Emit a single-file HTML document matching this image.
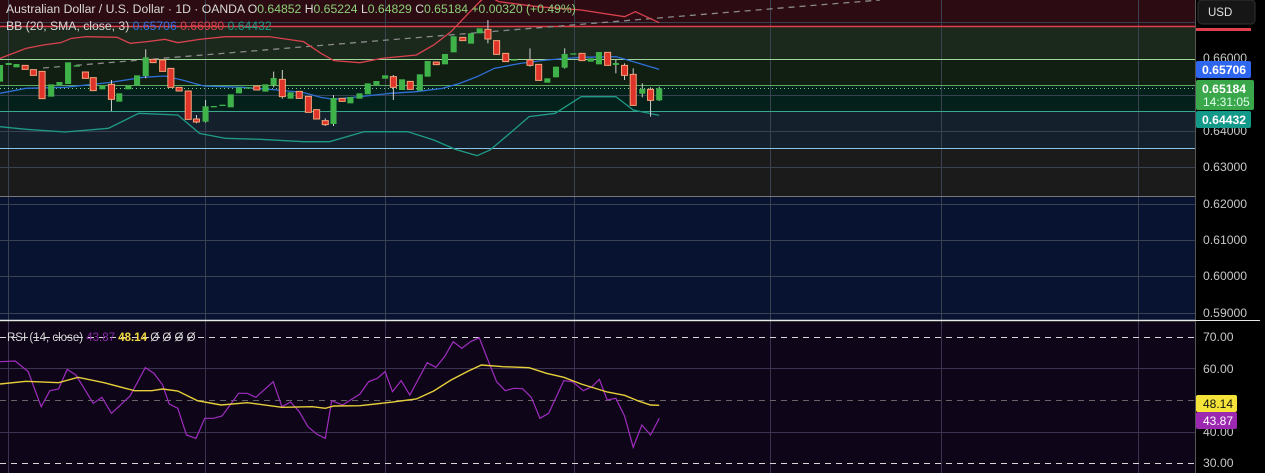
<!DOCTYPE html>
<html><head><meta charset="utf-8"><style>
html,body{margin:0;padding:0;background:#000;width:1265px;height:473px;overflow:hidden;font-family:"Liberation Sans",sans-serif}
svg{display:block}
</style></head><body>
<svg width="1265" height="473" viewBox="0 0 1265 473" xmlns="http://www.w3.org/2000/svg" font-family="Liberation Sans, sans-serif">
<rect x="0" y="0" width="1195" height="26" fill="#2c0c12"/>
<rect x="0" y="26" width="1195" height="33" fill="#1b281c"/>
<rect x="0" y="59" width="1195" height="27" fill="#111f12"/>
<rect x="0" y="86" width="1195" height="25" fill="#04201a"/>
<rect x="0" y="111" width="1195" height="37" fill="#14212d"/>
<rect x="0" y="148" width="1195" height="48" fill="#1b1b1b"/>
<rect x="0" y="196" width="1195" height="124" fill="#081332"/>
<g stroke="#3a4150" stroke-width="1">
<line x1="0" y1="22.5" x2="1195" y2="22.5"/>
<line x1="0" y1="95.5" x2="1195" y2="95.5"/>
<line x1="0" y1="131.5" x2="1195" y2="131.5"/>
<line x1="0" y1="167.5" x2="1195" y2="167.5"/>
<line x1="0" y1="204.5" x2="1195" y2="204.5"/>
<line x1="0" y1="240.5" x2="1195" y2="240.5"/>
<line x1="0" y1="276.5" x2="1195" y2="276.5"/>
<line x1="0" y1="313.5" x2="1195" y2="313.5"/>
<line x1="8.5" y1="0" x2="8.5" y2="473"/>
<line x1="205.5" y1="0" x2="205.5" y2="473"/>
<line x1="385.5" y1="0" x2="385.5" y2="473"/>
<line x1="574.5" y1="0" x2="574.5" y2="473"/>
<line x1="770.5" y1="0" x2="770.5" y2="473"/>
<line x1="941.5" y1="0" x2="941.5" y2="473"/>
<line x1="1138.5" y1="0" x2="1138.5" y2="473"/>
</g>
<line x1="0" y1="196.5" x2="1195" y2="196.5" stroke="#777" />
<line x1="0" y1="26.5" x2="1195" y2="26.5" stroke="#e0404a" stroke-width="1.5"/>
<line x1="0" y1="59.5" x2="1195" y2="59.5" stroke="#9ed89a"/>
<line x1="0" y1="85.5" x2="1195" y2="85.5" stroke="#5fa860"/>
<line x1="0" y1="88.5" x2="1195" y2="88.5" stroke="#7fcf8a" stroke-dasharray="1,3"/>
<line x1="0" y1="111.5" x2="1195" y2="111.5" stroke="#3aa890"/>
<line x1="0" y1="148.5" x2="1195" y2="148.5" stroke="#8ac4e8"/>
<line x1="0" y1="320.5" x2="1195" y2="320.5" stroke="#e8e8e8" stroke-width="1.5"/>
<line x1="43" y1="68" x2="880" y2="0" stroke="#8a8a8a" stroke-width="1.3" stroke-dasharray="6,5"/>
<g transform="scale(0.4337,0.33333)" fill="none" stroke-width="1.3">
<polyline vector-effect="non-scaling-stroke" stroke="#d9424e" points="0,175 60,145 100,135 140,128 165,115 200,110 270,112 300,130 340,125 380,118 410,128 460,118 520,110 620,110 700,125 740,160 770,182 830,188 880,175 960,165 1000,135 1040,95 1080,40 1110,0"/>
<polyline vector-effect="non-scaling-stroke" stroke="#d9424e" points="1110,0 1130,-10 1150,5 1240,20 1340,30 1440,50 1465,35 1520,68"/>
<polyline vector-effect="non-scaling-stroke" stroke="#2f6fd8" points="0,280 60,265 150,262 250,248 330,232 380,228 420,240 470,258 560,262 640,270 700,278 740,292 770,298 830,290 900,280 960,275 1020,265 1060,250 1100,230 1140,205 1200,190 1260,180 1340,172 1420,170 1460,185 1520,208"/>
<polyline vector-effect="non-scaling-stroke" stroke="#1e9a86" points="0,380 60,388 150,396 250,385 320,340 410,345 460,400 520,415 600,418 700,425 760,425 840,395 940,395 1000,420 1050,448 1100,467 1130,450 1180,395 1220,350 1280,340 1340,290 1420,290 1460,330 1520,346"/>
</g>
<g transform="scale(0.4337,0.33333)">
<g stroke="#cfcfcf" stroke-width="1">
<line vector-effect="non-scaling-stroke" x1="257" y1="240" x2="257" y2="333"/>
<line vector-effect="non-scaling-stroke" x1="336" y1="148" x2="336" y2="235"/>
<line vector-effect="non-scaling-stroke" x1="453" y1="345" x2="453" y2="370"/>
<line vector-effect="non-scaling-stroke" x1="474" y1="300" x2="474" y2="368"/>
<line vector-effect="non-scaling-stroke" x1="631" y1="215" x2="631" y2="262"/>
<line vector-effect="non-scaling-stroke" x1="651" y1="210" x2="651" y2="296"/>
<line vector-effect="non-scaling-stroke" x1="750" y1="355" x2="750" y2="378"/>
<line vector-effect="non-scaling-stroke" x1="769" y1="285" x2="769" y2="378"/>
<line vector-effect="non-scaling-stroke" x1="907" y1="225" x2="907" y2="300"/>
<line vector-effect="non-scaling-stroke" x1="1125" y1="60" x2="1125" y2="130"/>
<line vector-effect="non-scaling-stroke" x1="1222" y1="145" x2="1222" y2="200"/>
<line vector-effect="non-scaling-stroke" x1="1302" y1="145" x2="1302" y2="206"/>
<line vector-effect="non-scaling-stroke" x1="1420" y1="180" x2="1420" y2="220"/>
<line vector-effect="non-scaling-stroke" x1="1440" y1="190" x2="1440" y2="240"/>
<line vector-effect="non-scaling-stroke" x1="1460" y1="205" x2="1460" y2="318"/>
<line vector-effect="non-scaling-stroke" x1="1481" y1="250" x2="1481" y2="292"/>
<line vector-effect="non-scaling-stroke" x1="1500" y1="262" x2="1500" y2="350"/>
<line vector-effect="non-scaling-stroke" x1="1520" y1="260" x2="1520" y2="303"/>
</g>
<g fill="#3fb24a">
<rect x="-7" y="195" width="14" height="50"/><rect x="13" y="189" width="14" height="6"/><rect x="31" y="192" width="14" height="10"/>
<rect x="111" y="253" width="14" height="37"/><rect x="130" y="246" width="14" height="10"/><rect x="150" y="187" width="14" height="65"/>
<rect x="170" y="196" width="14" height="4"/><rect x="229" y="256" width="14" height="12"/><rect x="268" y="280" width="14" height="25"/>
<rect x="289" y="257" width="14" height="11"/><rect x="309" y="226" width="14" height="30"/><rect x="329" y="172" width="14" height="56"/>
<rect x="467" y="319" width="14" height="46"/><rect x="486" y="318" width="14" height="4"/><rect x="506" y="314" width="14" height="4"/>
<rect x="525" y="283" width="14" height="39"/><rect x="544" y="262" width="14" height="18"/><rect x="566" y="262" width="14" height="4"/>
<rect x="605" y="253" width="14" height="22"/><rect x="624" y="234" width="14" height="21"/><rect x="663" y="277" width="14" height="19"/>
<rect x="762" y="294" width="14" height="78"/><rect x="801" y="291" width="14" height="19"/><rect x="822" y="280" width="14" height="16"/>
<rect x="841" y="250" width="14" height="33"/><rect x="861" y="243" width="14" height="13"/><rect x="881" y="226" width="14" height="10"/>
<rect x="920" y="238" width="14" height="32"/><rect x="961" y="223" width="14" height="49"/><rect x="979" y="183" width="14" height="47"/>
<rect x="1019" y="162" width="14" height="31"/><rect x="1039" y="109" width="14" height="48"/><rect x="1079" y="100" width="14" height="31"/>
<rect x="1099" y="85" width="14" height="15"/><rect x="1178" y="178" width="14" height="4"/><rect x="1255" y="235" width="14" height="13"/>
<rect x="1275" y="200" width="14" height="32"/><rect x="1295" y="162" width="14" height="41"/><rect x="1315" y="160" width="14" height="4"/>
<rect x="1355" y="175" width="14" height="10"/><rect x="1374" y="156" width="14" height="37"/><rect x="1413" y="189" width="14" height="6"/>
<rect x="1474" y="267" width="14" height="14"/><rect x="1513" y="265" width="14" height="36"/>
</g>
<g fill="#e0342a" stroke="#f2a37a" stroke-width="1">
<rect vector-effect="non-scaling-stroke" x="51" y="196" width="14" height="12"/><rect vector-effect="non-scaling-stroke" x="70" y="209" width="14" height="17"/><rect vector-effect="non-scaling-stroke" x="90" y="214" width="14" height="82"/>
<rect vector-effect="non-scaling-stroke" x="190" y="216" width="14" height="19"/><rect vector-effect="non-scaling-stroke" x="208" y="233" width="14" height="39"/><rect vector-effect="non-scaling-stroke" x="250" y="253" width="14" height="45"/>
<rect vector-effect="non-scaling-stroke" x="346" y="178" width="14" height="10"/><rect vector-effect="non-scaling-stroke" x="368" y="180" width="14" height="34"/><rect vector-effect="non-scaling-stroke" x="387" y="205" width="14" height="57"/>
<rect vector-effect="non-scaling-stroke" x="406" y="262" width="14" height="11"/><rect vector-effect="non-scaling-stroke" x="427" y="273" width="14" height="85"/><rect vector-effect="non-scaling-stroke" x="446" y="357" width="14" height="9"/>
<rect vector-effect="non-scaling-stroke" x="585" y="258" width="14" height="12"/><rect vector-effect="non-scaling-stroke" x="644" y="238" width="14" height="52"/><rect vector-effect="non-scaling-stroke" x="683" y="274" width="14" height="21"/>
<rect vector-effect="non-scaling-stroke" x="704" y="289" width="14" height="48"/><rect vector-effect="non-scaling-stroke" x="723" y="329" width="14" height="28"/><rect vector-effect="non-scaling-stroke" x="743" y="362" width="14" height="12"/>
<rect vector-effect="non-scaling-stroke" x="782" y="295" width="14" height="9"/><rect vector-effect="non-scaling-stroke" x="900" y="230" width="14" height="32"/><rect vector-effect="non-scaling-stroke" x="939" y="244" width="14" height="24"/>
<rect vector-effect="non-scaling-stroke" x="999" y="186" width="14" height="8"/><rect vector-effect="non-scaling-stroke" x="1060" y="112" width="14" height="10"/><rect vector-effect="non-scaling-stroke" x="1118" y="88" width="14" height="29"/>
<rect vector-effect="non-scaling-stroke" x="1138" y="122" width="14" height="41"/><rect vector-effect="non-scaling-stroke" x="1159" y="160" width="14" height="25"/><rect vector-effect="non-scaling-stroke" x="1215" y="180" width="14" height="16"/>
<rect vector-effect="non-scaling-stroke" x="1235" y="193" width="14" height="48"/><rect vector-effect="non-scaling-stroke" x="1335" y="160" width="14" height="22"/><rect vector-effect="non-scaling-stroke" x="1394" y="157" width="14" height="39"/>
<rect vector-effect="non-scaling-stroke" x="1433" y="196" width="14" height="30"/><rect vector-effect="non-scaling-stroke" x="1453" y="223" width="14" height="93"/><rect vector-effect="non-scaling-stroke" x="1493" y="268" width="14" height="33"/>
</g>
</g>
<text x="6" y="13" font-size="12.2" fill="#d8d8d8">Australian Dollar / U.S. Dollar · 1D · OANDA  O<tspan fill="#8ed07a">0.64852</tspan>  H<tspan fill="#8ed07a">0.65224</tspan>  L<tspan fill="#8ed07a">0.64829</tspan>  C<tspan fill="#8ed07a">0.65184  +0.00320 (+0.49%)</tspan></text>
<text x="6" y="30" font-size="12.2" fill="#d8d8d8">BB (20, SMA, close, 3) <tspan fill="#3a6fe0">0.65706</tspan> <tspan fill="#d9424e">0.66980</tspan> <tspan fill="#1e9a86">0.64432</tspan></text>
<rect x="0" y="322" width="1195" height="151" fill="#0e0618"/>
<g stroke="#3a3450"><line x1="0" y1="368.5" x2="1195" y2="368.5"/><line x1="0" y1="432.5" x2="1195" y2="432.5"/>
<line x1="8.5" y1="322" x2="8.5" y2="473"/><line x1="205.5" y1="322" x2="205.5" y2="473"/><line x1="385.5" y1="322" x2="385.5" y2="473"/><line x1="574.5" y1="322" x2="574.5" y2="473"/><line x1="770.5" y1="322" x2="770.5" y2="473"/><line x1="941.5" y1="322" x2="941.5" y2="473"/><line x1="1138.5" y1="322" x2="1138.5" y2="473"/></g>
<g stroke="#d8d8d8" stroke-dasharray="6,5"><line x1="0" y1="337.5" x2="1195" y2="337.5"/><line x1="0" y1="463.5" x2="1195" y2="463.5"/></g>
<line x1="0" y1="400.5" x2="1195" y2="400.5" stroke="#666" stroke-dasharray="6,5"/>
<g transform="translate(0,310) scale(0.4337,0.33333)" fill="none">
<polyline vector-effect="non-scaling-stroke" stroke="#a02cc0" stroke-width="1.2" points="0,155 35,153 65,185 95,290 115,242 135,237 155,178 175,195 215,280 235,262 257,310 300,258 335,173 355,190 375,225 390,282 410,295 430,375 452,385 472,325 492,325 512,318 550,250 570,250 590,262 630,215 650,290 670,276 690,305 710,350 730,372 750,385 765,272 790,285 830,252 850,215 870,205 888,185 905,245 925,212 945,255 985,158 1005,172 1025,140 1045,95 1065,115 1085,95 1105,83 1125,150 1145,215 1165,242 1185,235 1205,236 1225,262 1245,325 1265,310 1300,212 1320,215 1345,242 1365,230 1382,208 1400,270 1420,265 1440,318 1460,412 1480,345 1500,375 1520,325"/>
<polyline vector-effect="non-scaling-stroke" stroke="#e6cf3a" stroke-width="1.4" points="0,222 60,214 135,218 180,202 240,218 310,242 350,242 375,237 410,243 455,272 510,285 570,278 650,292 720,290 750,295 770,288 830,287 900,277 960,267 1000,243 1040,210 1080,183 1110,165 1160,170 1220,173 1260,190 1300,202 1340,222 1400,246 1440,256 1470,272 1500,285 1520,286"/>
</g>
<text x="7" y="341" font-size="11.5" fill="#d8d8d8">RSI (14, close) <tspan fill="#8a2aa8">43.87</tspan> <tspan fill="#f0d840" font-weight="bold">48.14</tspan>  <tspan>Ø  Ø  Ø  Ø</tspan></text>
<rect x="1195" y="0" width="70" height="473" fill="#000"/>
<line x1="1195.5" y1="0" x2="1195.5" y2="473" stroke="#555"/>
<line x1="1195" y1="320.5" x2="1260" y2="320.5" stroke="#e8e8e8"/>
<rect x="1198" y="0" width="57" height="24" rx="4" fill="#161616" stroke="#333"/>
<text x="1208" y="16" font-size="11.5" fill="#e0e0e0">USD</text>
<rect x="1196" y="28" width="55" height="3" fill="#e0404a"/>
<g font-size="12.2" fill="#c8c8c8">
<text x="1203" y="62">0.66000</text><text x="1203" y="135">0.64000</text><text x="1203" y="171">0.63000</text><text x="1203" y="208">0.62000</text><text x="1203" y="244">0.61000</text><text x="1203" y="280">0.60000</text><text x="1203" y="317">0.59000</text>
<text x="1203" y="341">70.00</text><text x="1203" y="373">60.00</text><text x="1203" y="436">40.00</text><text x="1203" y="467">30.00</text>
</g>
<rect x="1196" y="61" width="55" height="17" rx="2" fill="#2f66f0"/>
<text x="1202" y="74" font-size="12.2" fill="#fff" font-weight="bold">0.65706</text>
<rect x="1196" y="80" width="58" height="30" rx="2" fill="#3aa84a"/>
<text x="1202" y="93" font-size="12.2" fill="#fff" font-weight="bold">0.65184</text>
<text x="1203" y="106" font-size="12" fill="#dfe">14:31:05</text>
<rect x="1196" y="111" width="55" height="17" rx="2" fill="#12998a"/>
<text x="1202" y="124" font-size="12.2" fill="#fff" font-weight="bold">0.64432</text>
<rect x="1196" y="395" width="41" height="17" rx="2" fill="#f4e43a"/>
<text x="1203" y="408" font-size="12" fill="#111">48.14</text>
<rect x="1196" y="412" width="41" height="17" rx="2" fill="#9c27b0"/>
<text x="1203" y="425" font-size="12" fill="#fff">43.87</text>
</svg>
</body></html>
